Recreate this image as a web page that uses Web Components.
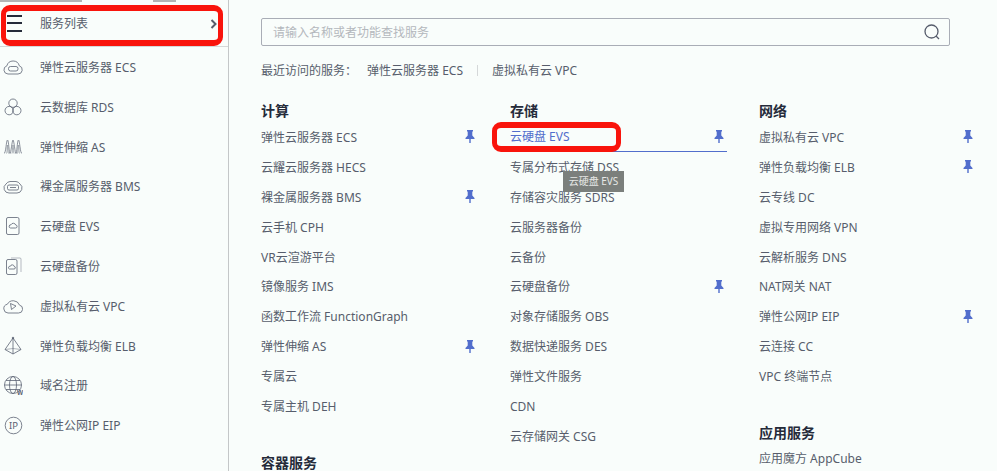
<!DOCTYPE html>
<html lang="zh">
<head>
<meta charset="utf-8">
<title>服务列表</title>
<style>
html, body {
    margin: 0;
    height: 471px;
    overflow: hidden;
    background: #f9fdfb;
    font: 12px/20px "Noto Sans", "Noto Sans CJK SC", sans-serif;
}
</style>
</head>
<body>
<svc-page>
    <svc-sidebar slot="side">
        <svc-side-item icon="ecs">弹性云服务器 ECS</svc-side-item>
        <svc-side-item icon="rds">云数据库 RDS</svc-side-item>
        <svc-side-item icon="as">弹性伸缩 AS</svc-side-item>
        <svc-side-item icon="bms">裸金属服务器 BMS</svc-side-item>
        <svc-side-item icon="evs">云硬盘 EVS</svc-side-item>
        <svc-side-item icon="backup">云硬盘备份</svc-side-item>
        <svc-side-item icon="vpc">虚拟私有云 VPC</svc-side-item>
        <svc-side-item icon="elb">弹性负载均衡 ELB</svc-side-item>
        <svc-side-item icon="domain">域名注册</svc-side-item>
        <svc-side-item icon="eip">弹性公网IP EIP</svc-side-item>
    </svc-sidebar>
    <svc-search></svc-search>
    <svc-recent></svc-recent>
    <svc-columns>
        <div>
            <svc-group title="计算">
                <svc-link pin>弹性云服务器 ECS</svc-link>
                <svc-link>云耀云服务器 HECS</svc-link>
                <svc-link pin>裸金属服务器 BMS</svc-link>
                <svc-link>云手机 CPH</svc-link>
                <svc-link>VR云渲游平台</svc-link>
                <svc-link>镜像服务 IMS</svc-link>
                <svc-link>函数工作流 FunctionGraph</svc-link>
                <svc-link pin>弹性伸缩 AS</svc-link>
                <svc-link>专属云</svc-link>
                <svc-link>专属主机 DEH</svc-link>
            </svc-group>
            <svc-group title="容器服务"></svc-group>
        </div>
        <div>
            <svc-group title="存储">
                <svc-link pin active>云硬盘 EVS</svc-link>
                <svc-link>专属分布式存储 DSS</svc-link>
                <svc-link>存储容灾服务 SDRS</svc-link>
                <svc-link>云服务器备份</svc-link>
                <svc-link>云备份</svc-link>
                <svc-link pin>云硬盘备份</svc-link>
                <svc-link>对象存储服务 OBS</svc-link>
                <svc-link>数据快递服务 DES</svc-link>
                <svc-link>弹性文件服务</svc-link>
                <svc-link>CDN</svc-link>
                <svc-link>云存储网关 CSG</svc-link>
            </svc-group>
        </div>
        <div>
            <svc-group title="网络">
                <svc-link pin>虚拟私有云 VPC</svc-link>
                <svc-link pin>弹性负载均衡 ELB</svc-link>
                <svc-link>云专线 DC</svc-link>
                <svc-link>虚拟专用网络 VPN</svc-link>
                <svc-link>云解析服务 DNS</svc-link>
                <svc-link>NAT网关 NAT</svc-link>
                <svc-link pin>弹性公网IP EIP</svc-link>
                <svc-link>云连接 CC</svc-link>
                <svc-link>VPC 终端节点</svc-link>
            </svc-group>
            <svc-group title="应用服务">
                <svc-link>应用魔方 AppCube</svc-link>
            </svc-group>
        </div>
    </svc-columns>
</svc-page>

<script>
// sidebar icons, all on a 20x20 box
const ICONS = {
    ecs: '<path d="M5 17h10a4.200 4.200 0 0 0 1.300-8.200A6.400 6.400 0 0 0 3.900 8.800 4.200 4.200 0 0 0 5 17z"/><rect x="5.500" y="9.500" width="9.500" height="4.500" rx="2"/>',
    rds: '<circle cx="10" cy="6.200" r="4.200"/><circle cx="6.200" cy="13.600" r="4.200"/><circle cx="13.800" cy="13.600" r="4.200"/>',
    as: '<g stroke-width=".7"><path d="M1 16.500c2 0 2.200-13.500 3.500-13.500S6 16.500 7 16.500s2-13.500 3-13.500 2 13.500 3 13.500S14.200 3 15.500 3 17 16.500 19 16.500"/><path d="M3.500 16.500C4.300 16 4 8 4.500 8s.4 8 1 8.500M9 16.500c.5-.5.500-8.500 1-8.500s.5 8 1 8.500M14.500 16.500c.5-.5.500-8.500 1-8.500s.4 8 1 8.500" stroke-opacity=".7"/></g>',
    bms: '<path d="M6 17h8a5 5 0 0 0 3-9A5.500 5.500 0 0 0 13 5.500H7A5.500 5.500 0 0 0 3 8a5 5 0 0 0 3 9z"/><rect x="4.500" y="9" width="11" height="5" rx="1.500"/><path d="M7 11.500h6"/>',
    evs: '<rect x="3.500" y="1.500" width="12.500" height="17" rx="1.500"/><path d="M7.500 12h5a1.500 1.500 0 0 0 .2-3 2.500 2.500 0 0 0-4.700-.2A1.600 1.600 0 0 0 7.500 12z"/>',
    backup: '<rect x="3.500" y="3.500" width="10.500" height="15" rx="1.500"/><path d="M6.500 13H11a1.200 1.200 0 0 0 .2-2.500 2 2 0 0 0-3.900-.2A1.400 1.400 0 0 0 6.500 13z"/><path d="M8 2h9a1 1 0 0 1 1 1v13" stroke-opacity=".55"/>',
    vpc: '<path d="M5 17h10.500a4 4 0 0 0 1-7.900A6.700 6.700 0 0 0 4.300 8.300 4.400 4.400 0 0 0 5 17z"/><path d="M7.500 7.500l5.500 2.500-4.500 3.500z"/>',
    elb: '<path d="M10 2L2 13.500 10 18l8-4.500zM10 2v16"/><path d="M2 13.500l8-1 8 1" stroke-opacity=".6"/><circle cx="10" cy="2" r=".8" fill="currentColor"/>',
    domain: '<circle cx="10" cy="10" r="8.500"/><ellipse cx="10" cy="10" rx="3.500" ry="8.500"/><path d="M1.500 10h17M3 5.500h14M3 14.500h14"/><text x="14" y="19.500" font-size="6.500" font-family="Liberation Sans" font-weight="700" fill="currentColor" stroke="none">W</text>',
    eip: '<circle cx="10.500" cy="10.500" r="8.300"/><text x="6" y="13.800" font-size="9.500" font-family="Noto Sans" fill="currentColor" stroke="none">IP</text>'
};

class SvcPage extends HTMLElement {
    constructor() {
        super();
        this.attachShadow({mode: 'open'}).innerHTML = `
<style>
:host { display: flex; height: 471px; overflow: hidden; }
main { flex: 1; padding: 18px 0 0 32px; }
</style>
<slot name="side"></slot>
<main><slot></slot></main>
<svc-marker style="left:1px;top:5px;width:222px;height:41px"></svc-marker>
<svc-marker style="left:492px;top:122px;width:129px;height:30px"></svc-marker>
<svc-tooltip style="left:563px;top:171px">云硬盘 EVS</svc-tooltip>`;
    }
}

class SvcSidebar extends HTMLElement {
    constructor() {
        super();
        this.attachShadow({mode: 'open'}).innerHTML = `
<style>
:host { display: block; flex: none; width: 228px; border-right: 1px solid #c4c7c8; color: #575d6c; }
.strip { display: flex; height: 2px; }
.strip i { background: #b2b4b5; }
.strip i:first-child { width: 82px; margin-right: 71px; }
.strip i:last-child { width: 23px; }
header {
    display: flex; align-items: center;
    height: 44px; border-bottom: 1px solid #d5d8d9;
    padding: 0 11px 0 7px; color: #575d6c;
}
.bars { width: 15px; height: 17px; margin-right: 18px; margin-top: -2px;
    border-top: 2px solid #252b3a; border-bottom: 2px solid #252b3a; box-sizing: border-box; position: relative; }
.bars::after { content: ""; position: absolute; left: 0; right: 0; top: 5.500px; height: 2px; background: #252b3a; }
span { flex: 1; }
</style>
<div class="strip"><i></i><i></i></div>
<header>
    <div class="bars"></div>
    <span>服务列表</span>
    <svg width="7" height="10" viewBox="0 0 7 10"><path d="M1.500 1l4 4-4 4" fill="none" stroke="#575d6c" stroke-width="2"/></svg>
</header>
<slot></slot>`;
    }
}

class SvcSideItem extends HTMLElement {
    constructor() {
        super();
        this.attachShadow({mode: 'open'}).innerHTML = `
<style>
:host { display: flex; align-items: center; height: 39.820px; padding-left: 3px; color: #575d6c; }
svg { width: 20px; height: 20px; margin-right: 17px; fill: none; stroke: #5c6373; stroke-width: .8; color: #5c6373; }
span { padding-top: 2px; }
</style>
<svg viewBox="0 0 20 20">${ICONS[this.getAttribute('icon')] || ''}</svg>
<span><slot></slot></span>`;
    }
}

class SvcSearch extends HTMLElement {
    constructor() {
        super();
        this.attachShadow({mode: 'open'}).innerHTML = `
<style>
:host {
    display: flex; align-items: center; box-sizing: border-box;
    width: 689px; height: 28px; padding: 0 9px 0 11px;
    border: 1px solid #a9adb6; border-radius: 2px; color: #b4b8bd;
}
span { flex: 1; padding-top: 2px; }
</style>
<span>请输入名称或者功能查找服务</span>
<svg width="16" height="16" viewBox="0 0 16 16" fill="none" stroke="#575d6c" stroke-width="1.300">
    <circle cx="7.500" cy="7.500" r="6.500"/><path d="M12 12l3 3"/>
</svg>`;
    }
}

class SvcRecent extends HTMLElement {
    constructor() {
        super();
        this.attachShadow({mode: 'open'}).innerHTML = `
<style>
:host { display: flex; align-items: center; height: 20px; margin-top: 14px; color: #575d6c; }
b, span { padding-top: 2px; }
b { font-weight: 400; margin-right: 10px; }
i { width: 1px; height: 11px; background: #d5d8d9; margin: 0 14px; }
</style>
<b>最近访问的服务：</b>
<span>弹性云服务器 ECS</span>
<i></i>
<span>虚拟私有云 VPC</span>`;
    }
}

class SvcColumns extends HTMLElement {
    constructor() {
        super();
        this.attachShadow({mode: 'open'}).innerHTML = `
<style>
:host { display: grid; grid-template-columns: repeat(3, 217px); gap: 32px; margin-top: 20px; }
</style>
<slot></slot>`;
    }
}

class SvcGroup extends HTMLElement {
    constructor() {
        super();
        this.attachShadow({mode: 'open'}).innerHTML = `
<style>
:host { display: block; margin-bottom: 31px; }
h3 { margin: 0 0 2px; font: 700 14px/20px "Noto Sans CJK SC", sans-serif; color: #252b3a; }
:host(:not(:first-child)) h3 { margin-bottom: 1px; }
</style>
<h3>${this.getAttribute('title')}</h3>
<slot></slot>`;
    }
}

class SvcLink extends HTMLElement {
    constructor() {
        super();
        const pin = this.hasAttribute('pin') ? `
<svg width="10" height="13" viewBox="0 0 10 13"><path d="M2 0h6v1L7.300 2v3.500L9.500 8v1H5.700v4H4.300V9H.5V8l2.200-2.500V2L2 1z" fill="#526ecc"/></svg>` : '';
        this.attachShadow({mode: 'open'}).innerHTML = `
<style>
:host { display: flex; align-items: center; box-sizing: border-box; height: 29.900px; padding-right: 3px; color: #575d6c; }
:host([active]) { color: #526ecc; border-bottom: 1px solid #526ecc; }
span { flex: 1; padding-top: 2px; }
</style>
<span><slot></slot></span>${pin}`;
    }
}

class SvcMarker extends HTMLElement {
    constructor() {
        super();
        this.attachShadow({mode: 'open'}).innerHTML = `
<style>
:host { position: absolute; box-sizing: border-box; border: solid #f9140c; border-width: 6px 5px; border-radius: 9px; }
</style>`;
    }
}

class SvcTooltip extends HTMLElement {
    constructor() {
        super();
        this.attachShadow({mode: 'open'}).innerHTML = `
<style>
:host { position: absolute; box-sizing: border-box; width: 61px; height: 21px; text-align: center;
    background: #7b7f7c; color: #e6e8e6; font-size: 10px; line-height: 21px; }
</style>
<slot></slot>`;
    }
}

customElements.define('svc-page', SvcPage);
customElements.define('svc-sidebar', SvcSidebar);
customElements.define('svc-side-item', SvcSideItem);
customElements.define('svc-search', SvcSearch);
customElements.define('svc-recent', SvcRecent);
customElements.define('svc-columns', SvcColumns);
customElements.define('svc-group', SvcGroup);
customElements.define('svc-link', SvcLink);
customElements.define('svc-marker', SvcMarker);
customElements.define('svc-tooltip', SvcTooltip);
</script>
</body>
</html>
